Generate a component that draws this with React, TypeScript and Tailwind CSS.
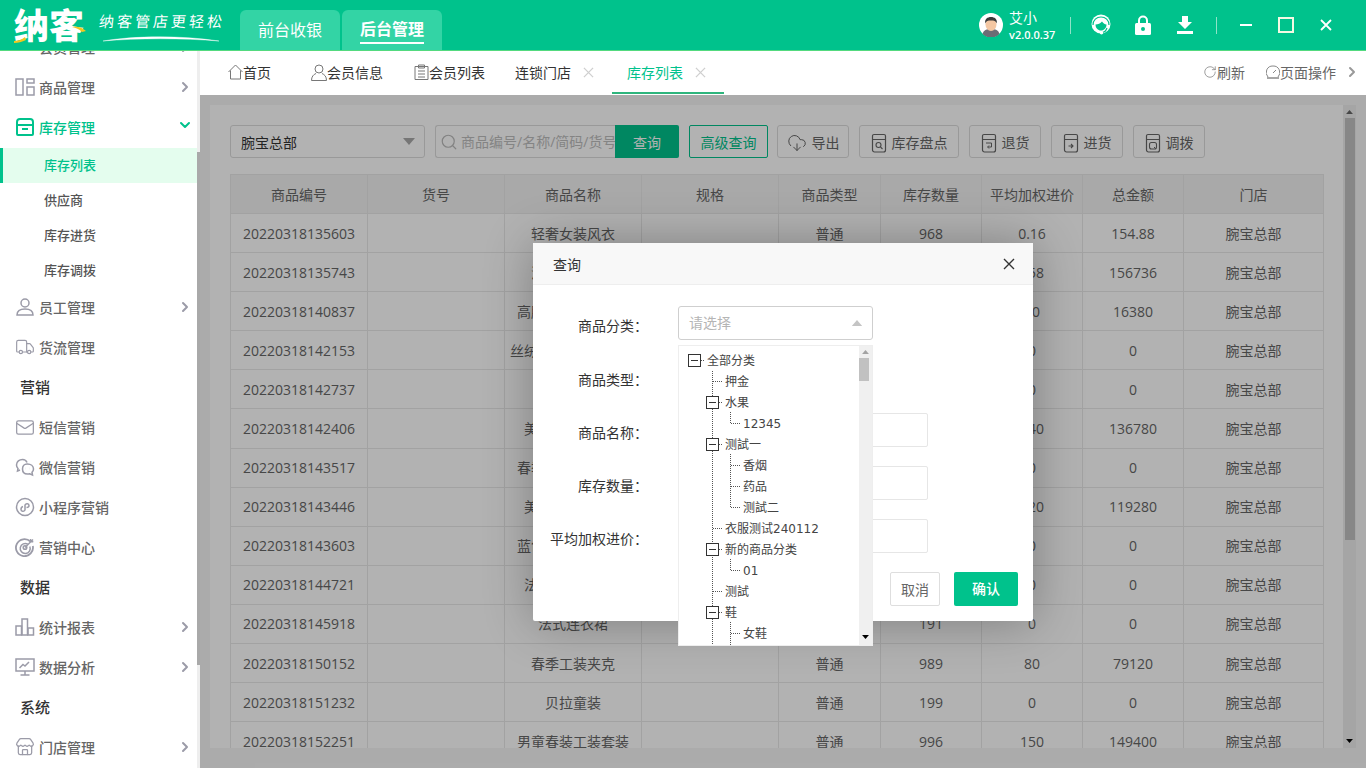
import { ChevronDown, ChevronRight, CloudDownload, Mail, RotateCw, Search, Store, Truck } from "lucide-react";
import type { ReactNode } from "react";

const GRAY = "#9b9ba8";

function Svg({ children, w = 20, h = 20, className = "" }: { children: ReactNode; w?: number; h?: number; className?: string }) {
  return (
    <svg width={w} height={h} viewBox={`0 0 ${w} ${h}`} fill="none" stroke="currentColor" strokeWidth="1.5" className={`shrink-0 ${className}`}>
      {children}
    </svg>
  );
}

function CloseX({ className }: { className: string }) {
  return (
    <svg viewBox="0 0 12 12" className={`shrink-0 ${className}`} stroke="currentColor" strokeWidth="1.4">
      <path d="M1 1l10 10M11 1L1 11" />
    </svg>
  );
}

function Tri({ up, className }: { up?: boolean; className: string }) {
  return (
    <svg viewBox="0 0 12 7" fill="currentColor" className={`shrink-0 ${className}`}>
      <path d={up ? "M6 0l6 7H0z" : "M0 0h12L6 7z"} />
    </svg>
  );
}

const navIcons: Record<string, ReactNode> = {
  list: (
    <Svg>
      <path d="M0 3h20M0 8h20M0 13h20" strokeWidth="2" />
    </Svg>
  ),
  goods: (
    <Svg>
      <rect x="1" y="2" width="7" height="16" />
      <rect x="12" y="2" width="7" height="4" />
      <rect x="12" y="10" width="7" height="8" />
    </Svg>
  ),
  stock: (
    <Svg>
      <path d="M2 8V5a3 3 0 0 1 3-3h10a3 3 0 0 1 3 3v3" strokeWidth="2" />
      <path d="M2 8h16v9a1 1 0 0 1-1 1H3a1 1 0 0 1-1-1zM7 12h6" strokeWidth="2" />
    </Svg>
  ),
  staff: (
    <Svg>
      <circle cx="10" cy="6" r="4" />
      <path d="M2 18c0-4 3-6 8-6s8 2 8 6z" />
    </Svg>
  ),
  truck: <Truck size={20} strokeWidth={1.4} />,
  mail: <Mail size={21} strokeWidth={1.5} />,
  wechat: (
    <Svg>
      <path d="M12 5.500C11.300 3.500 9.500 2.500 7.500 2.500 4.500 2.500 1.500 4.500 1.500 8c0 1.500.7 2.700 1.500 3.500L2.500 14l2.500-1" />
      <path d="M12.500 7c3.200 0 6 2 6 5 0 1.500-.7 2.500-1.500 3.300l.5 2.700-2.800-1.300c-.7.2-1.400.3-2.200.3-3 0-5-2-5-5s2-5 4.500-5z" />
      <path d="M10.500 11.500h.1M14.500 11.500h.1" strokeWidth="1.800" />
    </Svg>
  ),
  mini: (
    <Svg>
      <circle cx="10" cy="10" r="8.500" />
      <path d="M6 12.500c0 2 3 2.500 4 .5V8c1-2 4-1.500 4 .5 0 1.500-1.500 2-2.500 2M8 9.500c-1 .2-2 1-2 3" />
    </Svg>
  ),
  target: (
    <Svg>
      <path d="M15.500 4.700A8.500 8.500 0 1 0 17.800 9" strokeWidth="1.800" />
      <path d="M12.800 7.200A5 5 0 1 0 14.800 9.500" strokeWidth="1.500" />
      <circle cx="10" cy="10.500" r="1.800" />
      <path d="M10 10.500L18 2.500M15.500 2l.3 2.500 2.500.3" />
    </Svg>
  ),
  bars: (
    <Svg>
      <rect x="1" y="9" width="5.500" height="9" />
      <rect x="7" y="2" width="5.500" height="16" />
      <rect x="13" y="11" width="5.500" height="7" />
    </Svg>
  ),
  monitor: (
    <Svg>
      <rect x="1" y="2" width="18" height="12" />
      <path d="M4.500 11l3.500-3.500 2 1.500 4-4M10 14v3.500M5.500 18h9" />
    </Svg>
  ),
  store: <Store size={20} strokeWidth={1.5} />,
};

type NavRow =
  | { kind: "item"; label: string; icon: string; more?: boolean }
  | { kind: "title"; label: string }
  | { kind: "sub"; label: string };

const navTop: NavRow[] = [
  { kind: "item", label: "会员管理", icon: "list", more: true },
  { kind: "item", label: "商品管理", icon: "goods", more: true },
];

const navBottom: NavRow[] = [
  { kind: "sub", label: "供应商" },
  { kind: "sub", label: "库存进货" },
  { kind: "sub", label: "库存调拨" },
  { kind: "item", label: "员工管理", icon: "staff", more: true },
  { kind: "item", label: "货流管理", icon: "truck" },
  { kind: "title", label: "营销" },
  { kind: "item", label: "短信营销", icon: "mail" },
  { kind: "item", label: "微信营销", icon: "wechat" },
  { kind: "item", label: "小程序营销", icon: "mini" },
  { kind: "item", label: "营销中心", icon: "target" },
  { kind: "title", label: "数据" },
  { kind: "item", label: "统计报表", icon: "bars", more: true },
  { kind: "item", label: "数据分析", icon: "monitor", more: true },
  { kind: "title", label: "系统" },
  { kind: "item", label: "门店管理", icon: "store", more: true },
];

function NavLine({ row }: { row: NavRow }) {
  if (row.kind === "title") {
    return <div className="flex h-[40px] items-center pb-[2px] pl-[20px] text-[15px] font-medium text-[#333]">{row.label}</div>;
  }
  if (row.kind === "sub") {
    return <div className="flex h-[35px] items-center pl-[44px] text-[13px] font-medium text-[#555]">{row.label}</div>;
  }
  return (
    <div className="flex h-[40px] items-center pb-[2px] pl-[15px] pr-[4px] text-[14px] text-[#666]">
      <span className="flex w-[20px] shrink-0 justify-center text-[#9b9ba8]">{navIcons[row.icon]}</span>
      <span className="ml-[4px] font-medium">{row.label}</span>
      {row.more && <ChevronRight size={16} strokeWidth={3} color={GRAY} className="ml-auto" />}
    </div>
  );
}

function Sidebar() {
  return (
    <aside className="flex h-full w-[200px] shrink-0 overflow-hidden bg-white">
      <div className="-mt-[23px] w-[197px] shrink-0">
        {navTop.map((row) => (
          <NavLine key={row.label} row={row} />
        ))}
        <div className="flex h-[40px] items-center pb-[2px] pl-[15px] pr-[4px] text-[14px] text-[#00c28c]">
          <span className="flex w-[20px] shrink-0 justify-center">{navIcons.stock}</span>
          <span className="ml-[4px] font-medium">库存管理</span>
          <ChevronDown size={16} strokeWidth={3} className="ml-auto -mt-[4px]" />
        </div>
        <div className="flex h-[35px] items-center border-l-[3px] border-[#00c28c] bg-[#e4fdee] pl-[41px] text-[13px] font-medium text-[#00c28c]">
          库存列表
        </div>
        {navBottom.map((row) => (
          <NavLine key={row.label} row={row} />
        ))}
      </div>
      <div className="flex w-[3px] shrink-0 flex-col bg-[#eeeeee]">
        <div className="mt-[101px] h-[513px] bg-[#a9a9a9]" />
      </div>
    </aside>
  );
}

function Header() {
  return (
    <header className="flex h-[51px] shrink-0 border-b border-[#53da7f] bg-[#00c28c] text-white">
      <div className="relative flex w-[240px] shrink-0 items-center pl-[14px]">
        <span className="text-[35px] font-black leading-none">纳客</span>
        <svg width="16" height="8" viewBox="0 0 16 8" className="absolute left-[14px] top-[35px]">
          <path d="M0 6c4 0 7-1 11-4l1 3c-4 2-8 3-12 3z" fill="#f3c81d" />
        </svg>
        <svg width="14" height="6" viewBox="0 0 14 6" className="absolute left-[72px] top-[26px]">
          <path d="M0 1c5-1 10 0 14 4l-4 1C7 3 4 2 0 1z" fill="#f3c81d" />
        </svg>
        <span className="ml-[15px] -mt-[7px] -skew-x-6 whitespace-nowrap text-[15px] tracking-[3px]">纳客管店更轻松</span>
        <svg width="118" height="8" viewBox="0 0 118 8" className="absolute left-[103px] top-[34px]">
          <path d="M0 7C30 2 75 1 116 7 80 4 35 4 0 7z" fill="#fff" stroke="#fff" strokeWidth=".4" />
        </svg>
      </div>
      <div className="mt-[10px] flex h-[40px] w-[100px] items-center justify-center rounded-t-[6px] bg-[#33d4a5] text-[16px]">前台收银</div>
      <div className="ml-[2px] mt-[10px] flex h-[40px] w-[100px] items-center justify-center rounded-t-[6px] bg-[#33d4a5] text-[16px] font-semibold">
        <span className="border-b-2 border-white pb-[1px]">后台管理</span>
      </div>
      <div className="ml-auto flex items-center pr-[34px]">
        <svg width="24" height="24" viewBox="0 0 24 24" className="shrink-0">
          <circle cx="12" cy="12" r="12" fill="#fff" />
          <path d="M3.500 21c1-4 4-5 8.500-5s7.500 1 8.500 5a12 12 0 0 1-17 0z" fill="#6c6c75" />
          <ellipse cx="12" cy="11.500" rx="5.500" ry="6.500" fill="#f4c7a3" />
          <path d="M6.200 10.500C5.500 6 8.500 4 12 4s6.500 2 5.800 6.500C17 8 15 7.500 12 7.500S7 8 6.200 10.500z" fill="#3a3a3a" />
        </svg>
        <div className="ml-[6px] flex w-[41px] flex-col">
          <span className="text-[14px] leading-[18px]">艾小</span>
          <span className="mt-[1px] whitespace-nowrap text-[11px] font-semibold leading-[14px]">v2.0.0.37</span>
        </div>
        <span className="ml-[20px] h-[17px] w-px bg-[#8fe3c8]" />
        <svg width="20" height="22" viewBox="0 0 20 22" className="ml-[20px] shrink-0">
          <circle cx="10" cy="10" r="9.500" fill="#fff" />
          <path d="M4.500 10.500c2.500 0 5-1 6.500-3 1 1.500 2.500 2.800 4.500 3 0 3.500-2.500 6-5.500 6s-5.500-2.500-5.500-6z" fill="#00c28c" />
          <path d="M2 11C2 6 5.500 3 10 3s8 3 8 8" fill="none" stroke="#00c28c" strokeWidth="1.200" />
          <path d="M16 14c-1 3-3 4.500-5 4.500" fill="none" stroke="#00c28c" strokeWidth="1.200" />
          <circle cx="10.500" cy="18.800" r="1.700" fill="#fff" />
        </svg>
        <svg width="16" height="20" viewBox="0 0 16 20" className="ml-[24px] shrink-0">
          <path d="M4 9V5.500a4 4 0 0 1 8 0V9" fill="none" stroke="#fff" strokeWidth="2" />
          <rect y="8" width="16" height="12" rx="1.500" fill="#fff" />
          <circle cx="8" cy="14" r="2" fill="#00c28c" />
        </svg>
        <svg width="16" height="18" viewBox="0 0 16 18" fill="#fff" className="ml-[26px] shrink-0">
          <path d="M5 0h6v6h4l-7 7-7-7h4zM0 15h16v3H0z" />
        </svg>
        <span className="ml-[23px] h-[17px] w-px bg-[#8fe3c8]" />
        <span className="ml-[23px] h-[2px] w-[12px] bg-white" />
        <span className="ml-[26px] h-[16px] w-[16px] border-2 border-[#f4f9e3]" />
        <CloseX className="ml-[26px] h-[12px] w-[12px] text-white [stroke-width:1.8px]" />
      </div>
    </header>
  );
}

function TabsBar() {
  return (
    <div className="flex h-[44px] shrink-0 bg-white pl-[28px] text-[14px] text-[#333]">
      <div className="flex h-full items-center pb-[2px]">
        <Svg w={15} h={16} className="text-[#777]">
          <path d="M.5 8L7.500 1l7 7M2.500 6.500v8.500h10V6.500" strokeWidth="1" />
        </Svg>
        <span>首页</span>
      </div>
      <div className="ml-[40px] flex h-full items-center pb-[2px]">
        <Svg w={16} h={17} className="text-[#777]">
          <circle cx="8" cy="5" r="4" strokeWidth="1" />
          <path d="M.5 16.500c0-4 2-6 4.500-7M15.500 16.500c0-4-2-6-4.500-7M.5 16.500h15" strokeWidth="1" />
        </Svg>
        <span>会员信息</span>
      </div>
      <div className="ml-[31px] flex h-full items-center pb-[2px]">
        <Svg w={15} h={16} className="text-[#777]">
          <path d="M1 2.500h13v13H1zM4.500 1h6v3h-6zM4 7h7M4 10h7M4 13h7" strokeWidth="1" />
        </Svg>
        <span>会员列表</span>
      </div>
      <div className="ml-[30px] flex h-full items-center pb-[2px]">
        <span>连锁门店</span>
        <CloseX className="ml-[12px] h-[11px] w-[11px] text-[#cfcfcf]" />
      </div>
      <div className="ml-[18px] box-border flex h-[43px] w-[112px] items-center border-b-2 border-[#2eb57d] pl-[15px] pt-[1px] text-[#00c28c]">
        <span>库存列表</span>
        <CloseX className="ml-[12px] h-[11px] w-[11px] text-[#cfcfcf]" />
      </div>
      <div className="ml-auto flex h-full items-center pb-[2px] pr-[6px] text-[14px] text-[#666]">
        <RotateCw size={14} strokeWidth={1.2} color="#777" />
        <span>刷新</span>
        <Svg w={14} h={14} className="ml-[21px] text-[#888]">
          <path d="M2 12A6.500 6.500 0 0 1 7 1a6.500 6.500 0 0 1 5 11M7 8l3-3" strokeWidth="1" />
          <path d="M1 13h12" strokeWidth="1.500" />
        </Svg>
        <span>页面操作</span>
        <ChevronRight size={16} strokeWidth={3} color="#999" className="ml-[8px]" />
      </div>
    </div>
  );
}

function Jar({ glyph }: { glyph: ReactNode }) {
  return (
    <Svg w={16} h={20} className="text-[#666]">
      <path d="M3 1.500h10a1.500 1.500 0 0 1 1.500 1.500v14a2 2 0 0 1-2 2h-9a2 2 0 0 1-2-2V3A1.500 1.500 0 0 1 3 1.500zM1.500 6.500h13" strokeWidth="1.200" />
      {glyph}
    </Svg>
  );
}

const tools: { label: string; width: string; icon: ReactNode }[] = [
  { label: "导出", width: "w-[72px]", icon: <CloudDownload size={20} strokeWidth={1.2} color="#666" /> },
  {
    label: "库存盘点",
    width: "w-[100px]",
    icon: <Jar glyph={<><circle cx="7.500" cy="12" r="2.500" strokeWidth="1.100" /><path d="M9.500 14l2 2" strokeWidth="1.100" /></>} />,
  },
  { label: "退货", width: "w-[72px]", icon: <Jar glyph={<path d="M5 10h5.500v4H7M8 12.500L6.500 14 8 15.500" strokeWidth="1" />} /> },
  { label: "进货", width: "w-[72px]", icon: <Jar glyph={<path d="M5.500 13h4M8 11l2 2-2 2" strokeWidth="1.100" />} /> },
  {
    label: "调拨",
    width: "w-[72px]",
    icon: <Jar glyph={<><rect x="4.500" y="9.500" width="7" height="6.500" rx="2" strokeWidth="1.100" /><path d="M9 14l1.500 1.500" strokeWidth="1" /></>} />,
  },
];

type Row = [string, string, string, string, string, string];

const rows: Row[] = [
  ["20220318135603", "轻奢女装风衣", "968", "0.16", "154.88", "普通"],
  ["20220318135743", "法式雪纺长裙", "992", "158", "156736", "普通"],
  ["20220318140837", "高腰阔腿牛仔长裤", "819", "20", "16380", "普通"],
  ["20220318142153", "丝绒复古碎花连衣裙", "195", "0", "0", "普通"],
  ["20220318142737", "针织开衫", "197", "0", "0", "普通"],
  ["20220318142406", "美式棒球夹克衫", "977", "140", "136780", "普通"],
  ["20220318143517", "春季新款休闲卫衣", "193", "0", "0", "普通"],
  ["20220318143446", "美式复古牛仔裙", "994", "120", "119280", "普通"],
  ["20220318143603", "蓝色条纹休闲衬衫", "198", "0", "0", "普通"],
  ["20220318144721", "法式碎花连衣裙", "192", "0", "0", "普通"],
  ["20220318145918", "法式连衣裙", "191", "0", "0", "普通"],
  ["20220318150152", "春季工装夹克", "989", "80", "79120", "普通"],
  ["20220318151232", "贝拉童装", "199", "0", "0", "普通"],
  ["20220318152251", "男童春装工装套装", "996", "150", "149400", "普通"],
];

const heads = ["商品编号", "货号", "商品名称", "规格", "商品类型", "库存数量", "平均加权进价", "总金额", "门店"];
const cell = "border border-[#e9e9e9] p-0 text-center font-normal";

function StockTable() {
  return (
    <table className="mt-[16px] w-[1093px] table-fixed border-collapse text-[14px] text-[#666]">
      <colgroup>
        <col className="w-[137px]" />
        <col className="w-[137px]" />
        <col className="w-[137px]" />
        <col className="w-[137px]" />
        <col className="w-[102px]" />
        <col className="w-[101px]" />
        <col className="w-[101px]" />
        <col className="w-[101px]" />
        <col className="w-[140px]" />
      </colgroup>
      <thead>
        <tr className="h-[39px] bg-[#f2f2f2]">
          {heads.map((h) => (
            <th key={h} className={cell}>
              {h}
            </th>
          ))}
        </tr>
      </thead>
      <tbody>
        {rows.map((r) => (
          <tr key={r[0]} className="h-[39.1px]">
            <td className={cell}>{r[0]}</td>
            <td className={cell} />
            <td className={cell}>{r[1]}</td>
            <td className={cell} />
            <td className={cell}>{r[5]}</td>
            <td className={cell}>{r[2]}</td>
            <td className={cell}>{r[3]}</td>
            <td className={cell}>{r[4]}</td>
            <td className={cell}>腕宝总部</td>
          </tr>
        ))}
      </tbody>
    </table>
  );
}

function Toolbar() {
  return (
    <div className="flex h-[33px] text-[14px]">
      <div className="flex w-[195px] items-center rounded-[3px] border border-[#dcdcdc] pl-[10px] pr-[9px] pt-[2px] text-[#333]">
        <span>腕宝总部</span>
        <Tri className="ml-auto -mt-[3px] h-[7px] w-[12px] text-[#aaaaaa]" />
      </div>
      <div className="ml-[10px] flex w-[244px]">
        <div className="flex w-[180px] items-center overflow-hidden whitespace-nowrap rounded-l-[3px] border border-r-0 border-[#dcdcdc] pl-[4px] text-[#bdbdbd]">
          <Search size={18} strokeWidth={1.6} color="#bbb" className="shrink-0" />
          <span className="ml-[3px]">商品编号/名称/简码/货号</span>
        </div>
        <div className="flex w-[64px] items-center justify-center rounded-r-[2px] bg-[#00c28c] pt-[2px] text-white">查询</div>
      </div>
      <div className="ml-[10px] mr-[9px] flex w-[79px] items-center justify-center rounded-[2px] border border-[#00c28c] pt-[2px] text-[#00c28c]">高级查询</div>
      <div className="flex gap-[10px]">
        {tools.map((t) => (
          <div key={t.label} className={`flex items-center justify-center gap-[5px] rounded-[3px] border border-[#dcdcdc] pt-[2px] text-[#666] ${t.width}`}>
            {t.icon}
            <span>{t.label}</span>
          </div>
        ))}
      </div>
    </div>
  );
}

type TreeNode = { text: string; level: 0 | 1 | 2; open?: boolean };

const tree: TreeNode[] = [
  { text: "全部分类", level: 0, open: true },
  { text: "押金", level: 1 },
  { text: "水果", level: 1, open: true },
  { text: "12345", level: 2 },
  { text: "测試一", level: 1, open: true },
  { text: "香烟", level: 2 },
  { text: "药品", level: 2 },
  { text: "测試二", level: 2 },
  { text: "衣服测试240112", level: 1 },
  { text: "新的商品分类", level: 1, open: true },
  { text: "01", level: 2 },
  { text: "测試", level: 1 },
  { text: "鞋", level: 1, open: true },
  { text: "女鞋", level: 2 },
];

const treeIndent = { 0: "pl-[9px]", 1: "pl-[27px]", 2: "pl-[45px]" };

function TreeDropdown() {
  return (
    <div className="absolute left-[145px] top-[102px] flex h-[301px] w-[195px] overflow-hidden border border-[#eeeeee] bg-white">
      <div className="relative flex-1 overflow-hidden pt-[4px] font-['DejaVu_Sans','Noto_Sans_CJK_SC',sans-serif] text-[12px] text-[#444]">
        <svg width="181" height="300" className="absolute left-0 top-0" fill="none" stroke="#555" strokeDasharray="1 1" shapeRendering="crispEdges">
          <path d="M33.500 25V300M51.500 66V78M51.500 108V162M51.500 213V225M51.500 276V300" />
          <path d="M22 14.500H26M33.500 35.500H44M40 56.500H44M51.500 77.500H62M40 98.500H44M51.500 119.500H62M51.500 140.500H62M51.500 161.500H62M33.500 182.500H44M40 203.500H44M51.500 224.500H62M33.500 245.500H44M40 266.500H44M51.500 287.500H62" />
        </svg>
        {tree.map((n) => (
          <div key={n.text} className={`relative flex h-[21px] items-center whitespace-nowrap ${treeIndent[n.level]}`}>
            {n.open ? (
              <span className="mr-[6px] flex h-[13px] w-[13px] shrink-0 items-center justify-center border border-[#333] bg-white">
                <span className="h-px w-[7px] bg-[#333]" />
              </span>
            ) : (
              <span className="w-[19px] shrink-0" />
            )}
            <span>{n.text}</span>
          </div>
        ))}
      </div>
      <div className="flex w-[13px] shrink-0 flex-col bg-[#f0f0f0]">
        <div className="flex h-[12px] items-center justify-center pr-[1px]">
          <Tri up className="h-[4px] w-[7px] text-[#a3a3a3]" />
        </div>
        <div className="h-[23px] w-[10px] bg-[#c1c1c1]" />
        <div className="mt-auto flex h-[14px] items-center justify-center pb-[2px]">
          <Tri className="h-[4px] w-[7px] text-black" />
        </div>
      </div>
    </div>
  );
}

const fields: { label: string; kind: "select" | "blank" | "input" }[] = [
  { label: "商品分类：", kind: "select" },
  { label: "商品类型：", kind: "blank" },
  { label: "商品名称：", kind: "input" },
  { label: "库存数量：", kind: "input" },
  { label: "平均加权进价：", kind: "input" },
];

function QueryDialog() {
  return (
    <div className="absolute left-[333px] top-[148px] w-[500px] rounded-[2px] bg-white text-[14px] text-[#333] shadow-[1px_1px_50px_rgba(0,0,0,0.3)]">
      <div className="flex h-[42px] items-center border-b border-[#eeeeee] bg-[#f8f8f8] pl-[20px] pr-[18px]">
        <span className="pt-[2px]">查询</span>
        <CloseX className="ml-auto h-[12px] w-[12px] text-[#333]" />
      </div>
      <div className="flex flex-col gap-[19px] pt-[21px]">
        {fields.map((f) => (
          <div key={f.label} className="flex h-[34px] items-center first:mb-[1px]">
            <span className="w-[115px] whitespace-nowrap pt-[4px] text-right">{f.label}</span>
            <div className="ml-[30px]">
              {f.kind === "select" && (
                <div className="flex h-[34px] w-[195px] items-center rounded-[3px] border border-[#cfcfcf] pl-[10px] pr-[9px] text-[#b5b5b5]">
                  <span className="pb-[2px]">请选择</span>
                  <Tri up className="ml-auto h-[6px] w-[12px] text-[#c4c4c4]" />
                </div>
              )}
              {f.kind === "input" && <div className="h-[34px] w-[250px] rounded-[2px] border border-[#e6e6e6]" />}
            </div>
          </div>
        ))}
      </div>
      <div className="flex justify-end gap-[14px] pb-[15px] pr-[15px] pt-[19px]">
        <div className="flex h-[34px] w-[50px] items-center justify-center rounded-[2px] border border-[#dedede] text-[#666]">取消</div>
        <div className="flex h-[34px] w-[64px] items-center justify-center rounded-[2px] bg-[#00c28c] pb-[2px] font-medium text-white">确认</div>
      </div>
      <TreeDropdown />
    </div>
  );
}

export default function App() {
  return (
    <div className="flex h-screen w-screen flex-col overflow-hidden bg-white font-['Open_Sans','Noto_Sans_CJK_SC',sans-serif]">
      <Header />
      <div className="flex min-h-0 flex-1">
        <Sidebar />
        <div className="flex min-w-0 flex-1 flex-col">
          <TabsBar />
          <main className="relative min-h-0 flex-1 bg-[#f5f5f5] pb-[20px] pl-[10px] pr-[10px] pt-[10px]">
            <div className="flex h-full overflow-hidden bg-white">
              <div className="min-w-0 flex-1 overflow-hidden pl-[20px] pt-[20px]">
                <Toolbar />
                <StockTable />
              </div>
              <div className="flex w-[13px] shrink-0 flex-col bg-[#ededed]">
                <div className="flex h-[13px] items-center justify-center">
                  <Tri up className="h-[4px] w-[7px] text-[#666]" />
                </div>
                <div className="h-[422px] w-[10px] self-center bg-[#c2c2c2]" />
                <div className="mt-auto flex h-[14px] items-center justify-center">
                  <Tri className="h-[4px] w-[7px] text-black" />
                </div>
              </div>
            </div>
            <div className="absolute inset-0 bg-black/30" />
            <QueryDialog />
          </main>
        </div>
      </div>
    </div>
  );
}
